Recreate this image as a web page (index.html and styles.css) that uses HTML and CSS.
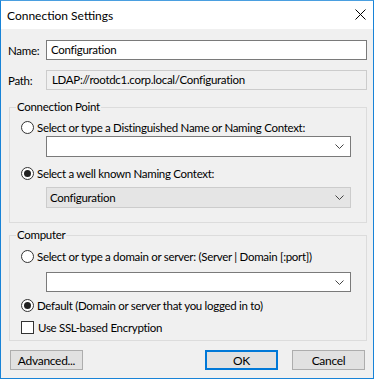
FILE: index.html
```html
<!DOCTYPE html>
<html lang="en">
<head>
    <meta charset="UTF-8">
    <meta name="viewport" content="width=device-width, initial-scale=1.0">
    <title>Connection Settings</title>
    <link rel="stylesheet" href="styles.css">
</head>
<body>
    <div class="window">
        <div class="titlebar">
            <span class="title">Connection Settings</span>
            <svg class="close" width="11" height="11" viewBox="0 0 11 11">
                <path d="M0.5 0.5 L10.5 10.5 M10.5 0.5 L0.5 10.5" stroke="#000" stroke-width="1" fill="none"/>
            </svg>
        </div>

        <div class="dialog">
            <div class="field-row">
                <label class="field-label" for="name">Name:</label>
                <div class="textbox" id="name">Configuration</div>
            </div>
            <div class="field-row">
                <label class="field-label">Path:</label>
                <div class="textbox readonly">LDAP://rootdc1.corp.local/Configuration</div>
            </div>

            <fieldset class="group group-point">
                <legend>Connection Point</legend>
                <div class="option first"><span class="radio"></span>Select or type a Distinguished Name or Naming Context:</div>
                <div class="combo">
                    <span class="combo-text"></span>
                    <svg class="chevron" width="9" height="5" viewBox="0 0 9 5"><path d="M0.5 0.5 L4.5 4.5 L8.5 0.5" stroke="#444" fill="none"/></svg>
                </div>
                <div class="option"><span class="radio checked"></span>Select a well known Naming Context:</div>
                <div class="combo readonly">
                    <span class="combo-text">Configuration</span>
                    <svg class="chevron" width="9" height="5" viewBox="0 0 9 5"><path d="M0.5 0.5 L4.5 4.5 L8.5 0.5" stroke="#444" fill="none"/></svg>
                </div>
            </fieldset>

            <fieldset class="group group-computer">
                <legend>Computer</legend>
                <div class="option first"><span class="radio"></span>Select or type a domain or server: (Server | Domain [:port])</div>
                <div class="combo short">
                    <span class="combo-text"></span>
                    <svg class="chevron" width="9" height="5" viewBox="0 0 9 5"><path d="M0.5 0.5 L4.5 4.5 L8.5 0.5" stroke="#444" fill="none"/></svg>
                </div>
                <div class="option after-short"><span class="radio checked"></span>Default (Domain or server that you logged in to)</div>
                <div class="option check-row"><span class="checkbox"></span>Use SSL-based Encryption</div>
            </fieldset>

            <div class="buttons">
                <button class="btn">Advanced...</button>
                <div class="spacer"></div>
                <button class="btn default">OK</button>
                <button class="btn">Cancel</button>
            </div>
        </div>
    </div>
</body>
</html>
```

FILE: styles.css
```css
body {
    margin: 0;
    padding: 0;
    font-family: Lato, "Liberation Sans", sans-serif;
    font-size: 11.5px;
    letter-spacing: -0.3px;
    color: #000;
    background-color: #fff;
}

.window {
    width: 374px;
    height: 379px;
    box-sizing: border-box;
    border: 1px solid #1883d7;
    border-top-color: #4a9fe0;
    background-color: #f0f0f0;
    display: flex;
    flex-direction: column;
}

.titlebar {
    height: 28px;
    background-color: #fff;
    display: flex;
    align-items: center;
    padding-left: 6px;
    padding-right: 7px;
}

.title {
    flex: 1;
    font-size: 12px;
    letter-spacing: 0;
    margin-top: 1px;
}

.close {
    margin-top: -2px;
}

.dialog {
    padding: 11px 6px 0 7px;
}

.field-row {
    display: flex;
    align-items: center;
    height: 20px;
    margin-bottom: 10px;
}

.field-label {
    width: 38px;
    flex-shrink: 0;
}

.textbox {
    flex: 1;
    height: 20px;
    box-sizing: border-box;
    border: 1px solid #7a7a7a;
    background-color: #fff;
    padding-left: 4px;
    line-height: 18px;
    white-space: nowrap;
}

.textbox.readonly {
    background-color: #f0f0f0;
    border-color: #cccccc;
    padding-left: 5px;
}

.group {
    margin: 0 0 0 1px;
    padding: 0 0 14px 0;
    border: 1px solid #dcdcdc;
    min-width: 0;
}

.group-computer {
    margin-top: 5px;
    padding-bottom: 5px;
}

.group legend {
    margin-left: 6px;
    padding: 0 1px;
    line-height: 14px;
}

.option {
    display: flex;
    align-items: center;
    height: 16px;
    margin-top: 8px;
    padding-left: 11px;
    white-space: nowrap;
}

.option.first {
    margin-top: 5px;
}

.group-computer .option.first {
    margin-top: 6px;
}

.radio {
    width: 13px;
    height: 13px;
    box-sizing: border-box;
    border: 1px solid #333;
    border-radius: 50%;
    background-color: #fff;
    margin-right: 3px;
    display: flex;
    align-items: center;
    justify-content: center;
}

.radio.checked::after {
    content: "";
    width: 7px;
    height: 7px;
    border-radius: 50%;
    background-color: #222;
}

.checkbox {
    width: 13px;
    height: 13px;
    box-sizing: border-box;
    border: 1px solid #333;
    background-color: #fff;
    margin-right: 4px;
}

.combo {
    display: flex;
    align-items: center;
    height: 21px;
    box-sizing: border-box;
    margin: 1px 15px 0 36px;
    border: 1px solid #7a7a7a;
    background-color: #fff;
    padding: 0 6px 0 3px;
}

.combo.short {
    height: 20px;
    margin-top: 8px;
}

.combo.readonly {
    margin-top: 6px;
    background-color: #e5e5e5;
    border-color: #cccccc;
}

.combo-text {
    flex: 1;
}

.option.after-short {
    margin-top: 5px;
}

.option.check-row {
    margin-top: 6px;
}

.buttons {
    display: flex;
    margin-top: 9px;
    padding: 0 2px;
}

.spacer {
    flex: 1;
}

.btn {
    width: 73px;
    height: 20px;
    box-sizing: border-box;
    border: 1px solid #adadad;
    background-color: #e1e1e1;
    font-family: inherit;
    font-size: 12px;
    letter-spacing: inherit;
    color: #000;
    padding: 0;
    margin: 0;
}

.btn.default {
    border: 2px solid #0078d7;
    margin-right: 14px;
}
```
